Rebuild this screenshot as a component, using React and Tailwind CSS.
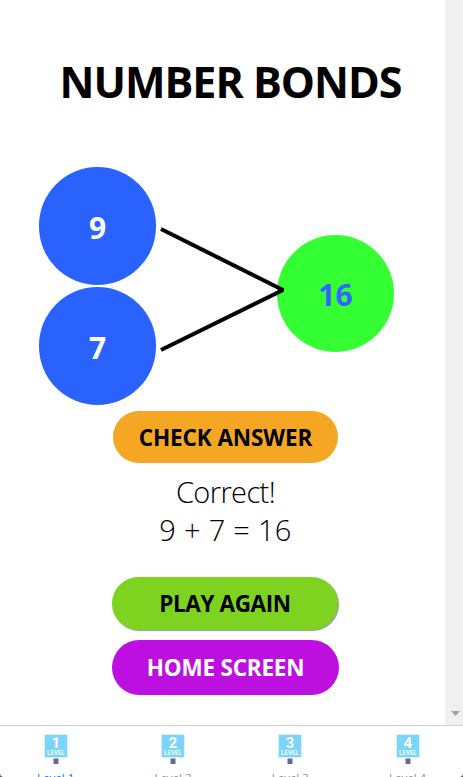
import React, { useState } from 'react';

const LEVELS = [1, 2, 3, 4];

const Bubble = ({ value, className }) => (
  <div className={`w-[117px] rounded-full flex items-center justify-center pt-0.5 text-[30px] font-bold ${className}`}>
    {value}
  </div>
);

const PillButton = ({ className, children, onClick }) => (
  <button type="button" onClick={onClick} className={`rounded-full flex items-center justify-center text-[22.5px] font-bold whitespace-nowrap ${className}`}>
    {children}
  </button>
);

const LevelIcon = ({ level }) => (
  <svg className="w-6 h-8 shrink-0" viewBox="0 0 24 32">
    <rect x="0" y="0" width="24" height="24" rx="1" fill="#d9f3fd" />
    <rect x="1" y="1" width="22" height="22" fill="#7ad5f8" />
    <text x="12" y="13.5" textAnchor="middle" fontSize="14.5" fontWeight="700" fill="#fff" fontFamily="Roboto, sans-serif">{level}</text>
    <text x="3" y="21" fontSize="6.5" fontWeight="500" fill="#fff" textLength="18" lengthAdjust="spacingAndGlyphs" fontFamily="Roboto, sans-serif">LEVEL</text>
    <rect x="9.5" y="24.5" width="5" height="5.5" fill="#646b8d" />
  </svg>
);

const App = () => {
  const [activeLevel, setActiveLevel] = useState(1);

  return (
    <div className="w-[463px] h-[777px] bg-[#555] overflow-hidden flex flex-col text-black font-['Open_Sans','Noto_Sans',sans-serif] select-none">
      <div className="h-[725px] bg-white flex">
        <main className="w-[445px] flex flex-col">
          <h1 className="mt-[52px] h-[60px] leading-[60px] pl-4 text-center text-[43px] font-bold tracking-[-1px] whitespace-nowrap">
            NUMBER BONDS
          </h1>

          {/* Number bond diagram */}
          <div className="mt-[55px] pl-[39px] h-[238px] flex">
            <div className="flex flex-col gap-0.5">
              <Bubble value="9" className="h-[118px] bg-[#2962ff] text-white" />
              <Bubble value="7" className="h-[118px] bg-[#2962ff] text-white" />
            </div>
            <svg className="w-[130px] h-[238px] ml-1 -mr-[13px] relative z-10" viewBox="160 167 130 238" fill="none">
              <path d="M161 229 L283 290 L161 350" stroke="#000" strokeWidth="4" strokeLinejoin="bevel" />
            </svg>
            <Bubble value="16" className="h-[117px] mt-[68px] bg-[#33ff33] text-[#3366ff]" />
          </div>

          {/* Answer and actions */}
          <div className="mt-1.5 pl-1.5 flex flex-col items-center">
            <PillButton className="w-[225px] h-[52px] pt-0.5 bg-[#f5a623] tracking-[-0.1px]">CHECK ANSWER</PillButton>
            <div className="mt-2.5 h-[104px] text-center text-[29px] font-[350] leading-[38px]">
              <p className="tracking-[-0.6px]">Correct!</p>
              <p className="tracking-[0.3px]">9 + 7 = 16</p>
            </div>
            <PillButton className="w-[226px] h-[53px] mr-px bg-[#7ed321] tracking-[-0.4px] shadow-[1px_1px_1px_#999]">PLAY AGAIN</PillButton>
            <PillButton className="mt-2.5 w-[227px] h-[55px] pt-px bg-[#bd10e0] text-white tracking-[-0.2px]">HOME SCREEN</PillButton>
          </div>
        </main>

        {/* Scrollbar track */}
        <div className="w-[18px] bg-[#f0f0f0] flex flex-col justify-end items-center pb-[9px] pl-0.5">
          <svg className="w-[9px] h-[5px]" viewBox="0 0 9 5">
            <path d="M0 0h9L4.5 5z" fill="#a3a3a3" />
          </svg>
        </div>
      </div>

      <nav className="h-[52px] border-t border-[#d0d0d0] bg-white rounded-b-[4px] flex">
        {LEVELS.map((level) => (
          <button
            key={level}
            type="button"
            onClick={() => setActiveLevel(level)}
            className="w-[117.3px] shrink-0 pt-2 pr-[6px] flex flex-col items-center"
          >
            <LevelIcon level={level} />
            <span className={`mt-1 text-[11.5px] leading-4 whitespace-nowrap ${activeLevel === level ? 'text-[#007aff]' : 'text-[#8e8e93]'}`}>
              Level {level}
            </span>
          </button>
        ))}
      </nav>
    </div>
  );
};

export default App;
